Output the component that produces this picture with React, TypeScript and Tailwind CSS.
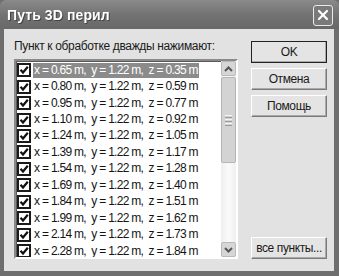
import { X } from "lucide-react";

const ROWS = [
  ["0.65", "0.35"],
  ["0.80", "0.59"],
  ["0.95", "0.77"],
  ["1.10", "0.92"],
  ["1.24", "1.05"],
  ["1.39", "1.17"],
  ["1.54", "1.28"],
  ["1.69", "1.40"],
  ["1.84", "1.51"],
  ["1.99", "1.62"],
  ["2.14", "1.73"],
  ["2.28", "1.84"],
];

const font = { fontFamily: '"Liberation Sans", Arial, sans-serif' };

function CheckBox() {
  return (
    <svg width="14" height="14" viewBox="0 0 14 14" className="shrink-0">
      <rect x="1" y="1" width="12" height="12" fill="#fff" stroke="#1a1a1a" strokeWidth="2" />
      <path d="M3.5 6.8 L6 9.5 L10.8 3.8" fill="none" stroke="#111" strokeWidth="2.2" />
    </svg>
  );
}

function Btn({ label, strong }: { label: string; strong?: boolean }) {
  return (
    <div
      className={`h-[22px] w-[76px] flex items-center justify-center bg-[#e4e4e4] text-[12px] tracking-[-0.4px] text-[#1a1a1a] border ${
        strong ? "border-[#222]" : "border-t-white border-l-white border-b-[#7a7a7a] border-r-[#7a7a7a]"
      } shadow-[inset_-1px_-1px_0_#a9a9a9]`}
    >
      {label}
    </div>
  );
}

export default function App() {
  return (
    <div className="w-[339px] h-[276px] flex flex-col bg-[#6e6e6e] overflow-hidden select-none" style={font}>
      {/* title bar */}
      <div className="h-[29px] shrink-0 flex items-center justify-between pl-[7px] pr-[6px] pt-[1px] bg-gradient-to-b from-[#8a8a8a] via-[#737373] to-[#686868] rounded-t-[6px]">
        <span className="text-white font-bold text-[14px] tracking-[0.1px] drop-shadow-[1px_1px_0_#444]">Путь 3D перил</span>
        <div className="w-[20px] h-[21px] rounded-[3px] border border-[#eaeaea] bg-[#7a7a7a] flex items-center justify-center">
          <X className="w-[16px] h-[16px] text-white" strokeWidth={3.2} />
        </div>
      </div>

      {/* body */}
      <div className="flex-1 mx-[4px] mr-[5px] mb-[5px] bg-[#e2e2e2] flex pl-[10px] pr-[7px] pt-[10px] pb-[12px] gap-[13px]">
        <div className="w-[224px] flex flex-col">
          <div className="h-[20px] text-[12px] tracking-[-0.35px] text-[#1a1a1a] leading-[14px]">
            Пункт к обработке дважды нажимают:
          </div>
          <div className="h-[200px] flex border-2 border-t-[#8a8a8a] border-l-[#8a8a8a] border-b-white border-r-white shadow-[inset_1px_1px_0_#5a5a5a] bg-white">
            <div className="flex-1 overflow-hidden pt-[1px]">
              {ROWS.map(([x, z], i) => (
                <div key={i} className="h-[16.45px] flex items-center pl-[1px] gap-[2px]">
                  <CheckBox />
                  <span
                    className={`px-[1px] text-[12px] leading-[15px] whitespace-pre tracking-[-0.7px] ${
                      i === 0 ? "bg-[#8b8b8b] text-white" : "text-[#141414]"
                    }`}
                  >
                    {`x = ${x} m,  y = 1.22 m,  z = ${z} m`}
                  </span>
                </div>
              ))}
            </div>
            {/* scrollbar */}
            <div className="w-[15px] flex flex-col bg-gradient-to-r from-[#eeeeee] via-[#fafafa] to-[#efefef]">
              <div className="h-[15px] rounded-[2px] border border-[#b9b9b9] bg-[#d6d6d6] flex items-center justify-center">
                <svg width="9" height="6" viewBox="0 0 9 6">
                  <path d="M1 5 L4.5 1.5 L8 5" fill="none" stroke="#555" strokeWidth="2" />
                </svg>
              </div>
              <div className="h-[86px] mt-[1px] rounded-[2px] border border-[#b5b5b5] bg-[#d3d3d3] flex flex-col items-center justify-center gap-[1px]">
                <div className="w-[7px] h-px bg-[#f3f3f3]" />
                <div className="w-[7px] h-px bg-[#9a9a9a]" />
                <div className="w-[7px] h-px bg-[#f3f3f3]" />
                <div className="w-[7px] h-px bg-[#9a9a9a]" />
                <div className="w-[7px] h-px bg-[#f3f3f3]" />
                <div className="w-[7px] h-px bg-[#9a9a9a]" />
              </div>
              <div className="flex-1" />
              <div className="h-[15px] rounded-[2px] border border-[#b9b9b9] bg-[#d6d6d6] flex items-center justify-center">
                <svg width="9" height="6" viewBox="0 0 9 6">
                  <path d="M1 1 L4.5 4.5 L8 1" fill="none" stroke="#555" strokeWidth="2" />
                </svg>
              </div>
            </div>
          </div>
        </div>

        <div className="flex flex-col pt-[2px]">
          <div className="flex flex-col gap-[5px]">
            <Btn label="OK" strong />
            <Btn label="Отмена" />
            <Btn label="Помощь" />
          </div>
          <div className="flex-1" />
          <Btn label="все пункты..." />
        </div>
      </div>
    </div>
  );
}
